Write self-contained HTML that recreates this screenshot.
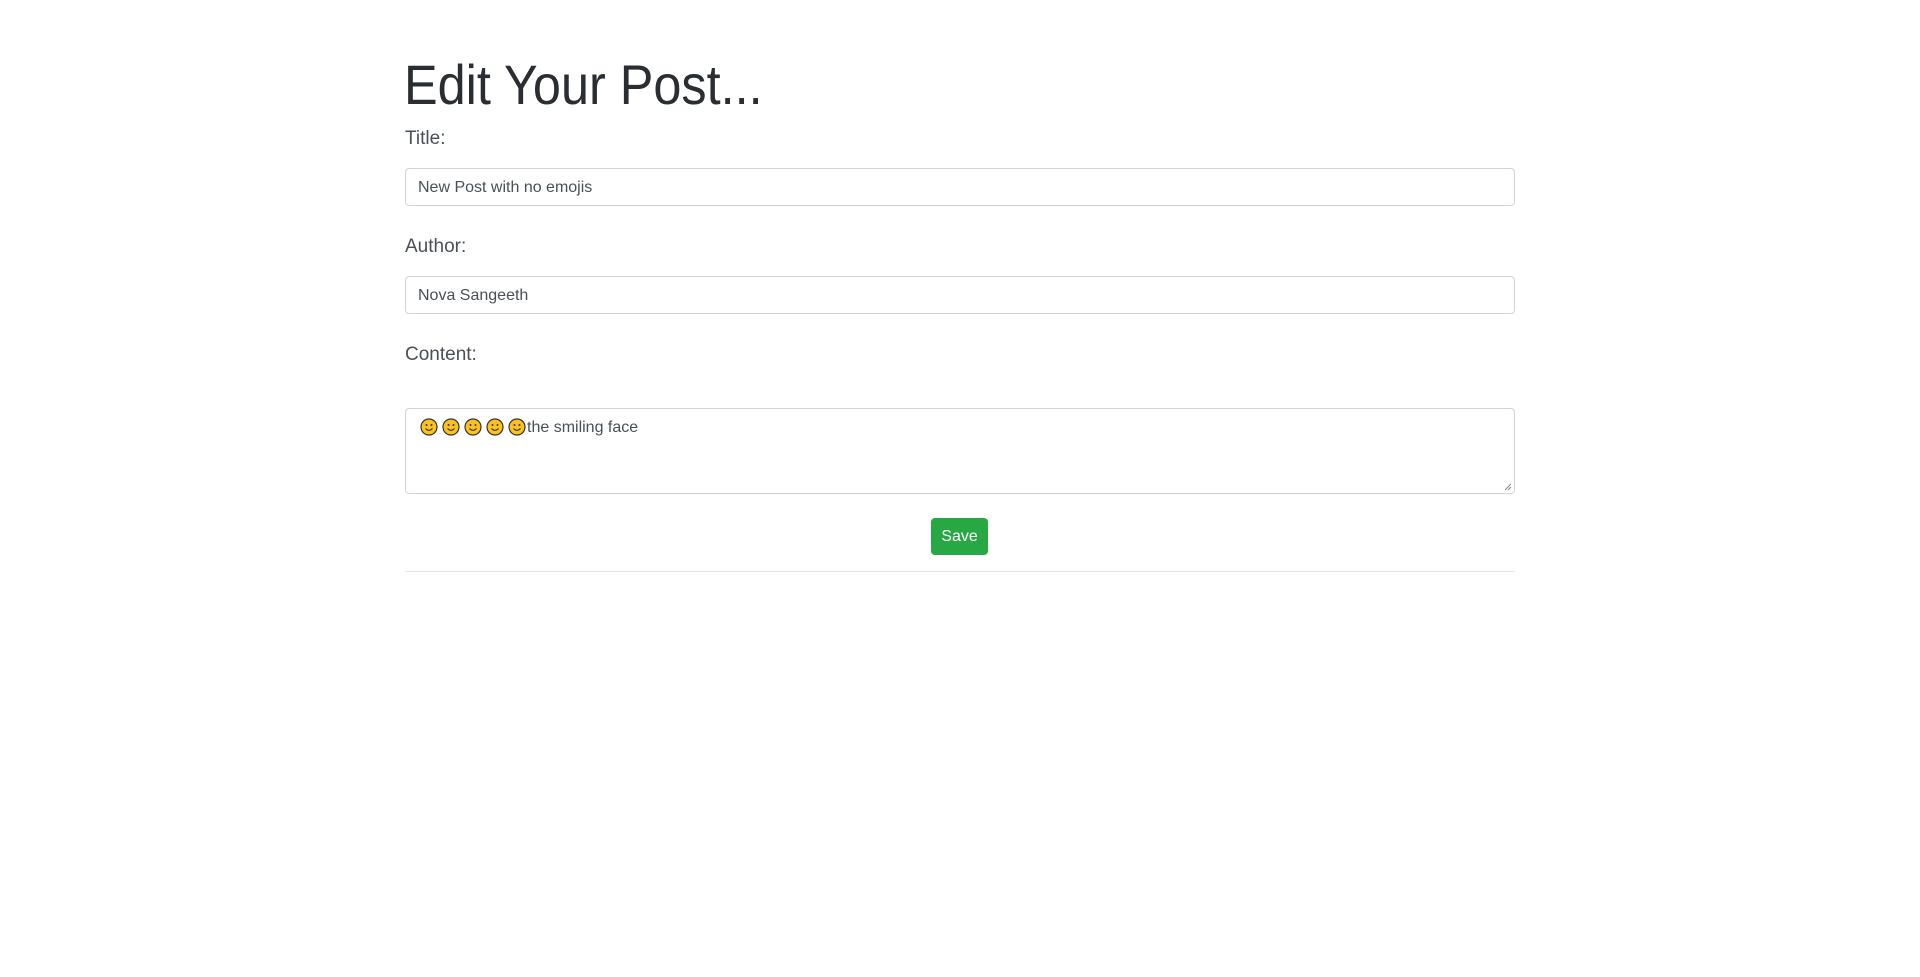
<!DOCTYPE html>
<html><head><meta charset="utf-8"><style>
body{margin:0;background:#fff;font-family:"Liberation Sans",sans-serif;color:#212529}
h1{position:absolute;left:404px;top:51px;margin:0;font-size:56px;font-weight:300;line-height:67px;color:#2a2e33;transform:scaleX(0.9);transform-origin:left top;white-space:nowrap}
.lab{position:absolute;left:405px;font-size:19px;color:#495057;font-weight:300;line-height:24px}
.in{position:absolute;left:405px;border:1px solid #ced4da;border-radius:4px;font-size:16px;color:#495057;box-sizing:border-box;width:1110px;padding-left:12px}
.btn{position:absolute;left:931px;top:518px;width:57px;height:37px;background:#28a745;border-radius:4px;color:#fff;font-size:16px;line-height:37px;text-align:center}
hr{position:absolute;left:405px;top:571px;width:1110px;margin:0;border:0;border-top:1px solid #e5e5e5}
.e{display:inline-block;width:18px;height:18px;vertical-align:-4px;margin-right:4px}
</style></head><body>
<h1>Edit Your Post...</h1>
<div class="lab" style="top:127px">Title:</div>
<div class="in" style="top:168px;height:38px;line-height:37px">New Post with no emojis</div>
<div class="lab" style="top:235px">Author:</div>
<div class="in" style="top:276px;height:38px;line-height:37px">Nova Sangeeth</div>
<div class="lab" style="top:343px">Content:</div>
<div class="in" style="top:408px;height:86px;padding-top:9px;line-height:20px"><span style="margin-left:2px"></span><svg class="e" viewBox="0 0 18 18"><circle cx="9" cy="9" r="8" fill="#fcc21b" stroke="#333" stroke-width="1.2"/><circle cx="6.5" cy="7" r="1" fill="#333"/><circle cx="11.5" cy="7" r="1" fill="#333"/><path d="M5.5 10.5Q9 14 12.5 10.5" fill="none" stroke="#333" stroke-width="1.1"/></svg><svg class="e" viewBox="0 0 18 18"><circle cx="9" cy="9" r="8" fill="#fcc21b" stroke="#333" stroke-width="1.2"/><circle cx="6.5" cy="7" r="1" fill="#333"/><circle cx="11.5" cy="7" r="1" fill="#333"/><path d="M5.5 10.5Q9 14 12.5 10.5" fill="none" stroke="#333" stroke-width="1.1"/></svg><svg class="e" viewBox="0 0 18 18"><circle cx="9" cy="9" r="8" fill="#fcc21b" stroke="#333" stroke-width="1.2"/><circle cx="6.5" cy="7" r="1" fill="#333"/><circle cx="11.5" cy="7" r="1" fill="#333"/><path d="M5.5 10.5Q9 14 12.5 10.5" fill="none" stroke="#333" stroke-width="1.1"/></svg><svg class="e" viewBox="0 0 18 18"><circle cx="9" cy="9" r="8" fill="#fcc21b" stroke="#333" stroke-width="1.2"/><circle cx="6.5" cy="7" r="1" fill="#333"/><circle cx="11.5" cy="7" r="1" fill="#333"/><path d="M5.5 10.5Q9 14 12.5 10.5" fill="none" stroke="#333" stroke-width="1.1"/></svg><svg class="e" style="margin-right:1px" viewBox="0 0 18 18"><circle cx="9" cy="9" r="8" fill="#fcc21b" stroke="#333" stroke-width="1.2"/><circle cx="6.5" cy="7" r="1" fill="#333"/><circle cx="11.5" cy="7" r="1" fill="#333"/><path d="M5.5 10.5Q9 14 12.5 10.5" fill="none" stroke="#333" stroke-width="1.1"/></svg>the smiling face
<svg style="position:absolute;right:2px;bottom:2px" width="8" height="8"><path d="M1 7L7 1M4 7L7 4" stroke="#888" stroke-width="1"/></svg></div>
<div class="btn">Save</div>
<hr>
</body></html>
